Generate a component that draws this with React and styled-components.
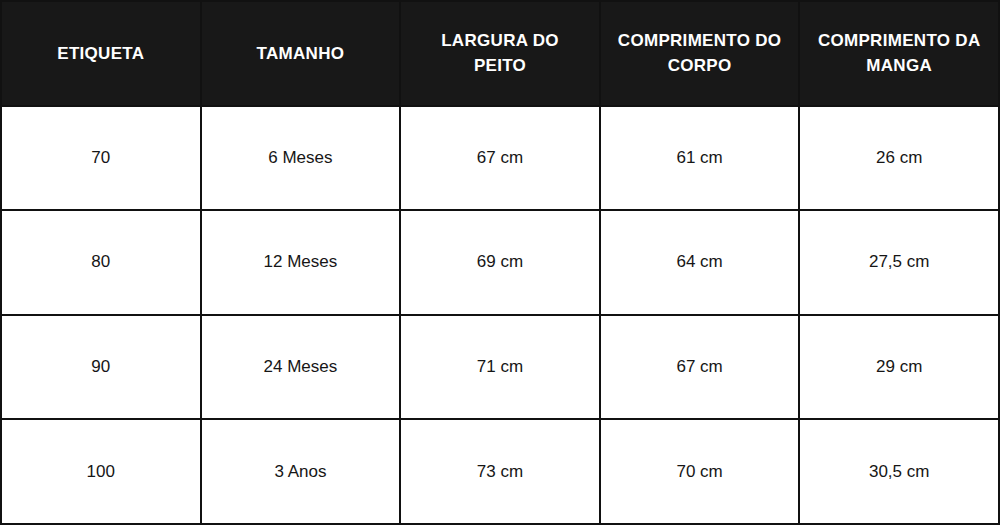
import React from "react";
import styled, { createGlobalStyle } from "styled-components";

const GlobalStyle = createGlobalStyle`
  html, body {
    margin: 0;
    padding: 0;
    background: #ffffff;
  }
  body {
    font-family: "Liberation Sans", Arial, sans-serif;
  }
`;

const Table = styled.div`
  width: 1000px;
  height: 525px;
  box-sizing: border-box;
  display: grid;
  grid-template-columns: repeat(5, 1fr);
  grid-template-rows: repeat(5, 1fr);
  gap: 2px;
  padding: 2px;
  background: #111111;
`;

const HeadCell = styled.div`
  background: #181818;
  color: #ffffff;
  font-weight: 700;
  font-size: 17px;
  letter-spacing: 0.3px;
  line-height: 25px;
  display: flex;
  align-items: center;
  justify-content: center;
  text-align: center;
  padding: 0 12px;
`;

const Cell = styled.div`
  background: #ffffff;
  color: #161616;
  font-size: 17px;
  display: flex;
  align-items: center;
  justify-content: center;
  text-align: center;
`;

const headers = [
  "ETIQUETA",
  "TAMANHO",
  "LARGURA DO PEITO",
  "COMPRIMENTO DO CORPO",
  "COMPRIMENTO DA MANGA",
];

const rows = [
  ["70", "6 Meses", "67 cm", "61 cm", "26 cm"],
  ["80", "12 Meses", "69 cm", "64 cm", "27,5 cm"],
  ["90", "24 Meses", "71 cm", "67 cm", "29 cm"],
  ["100", "3 Anos", "73 cm", "70 cm", "30,5 cm"],
];

export default function App() {
  return (
    <>
      <GlobalStyle />
      <Table>
        {headers.map((h) => (
          <HeadCell key={h}>{h}</HeadCell>
        ))}
        {rows.map((row, i) =>
          row.map((v, j) => <Cell key={i + "-" + j}>{v}</Cell>)
        )}
      </Table>
    </>
  );
}
